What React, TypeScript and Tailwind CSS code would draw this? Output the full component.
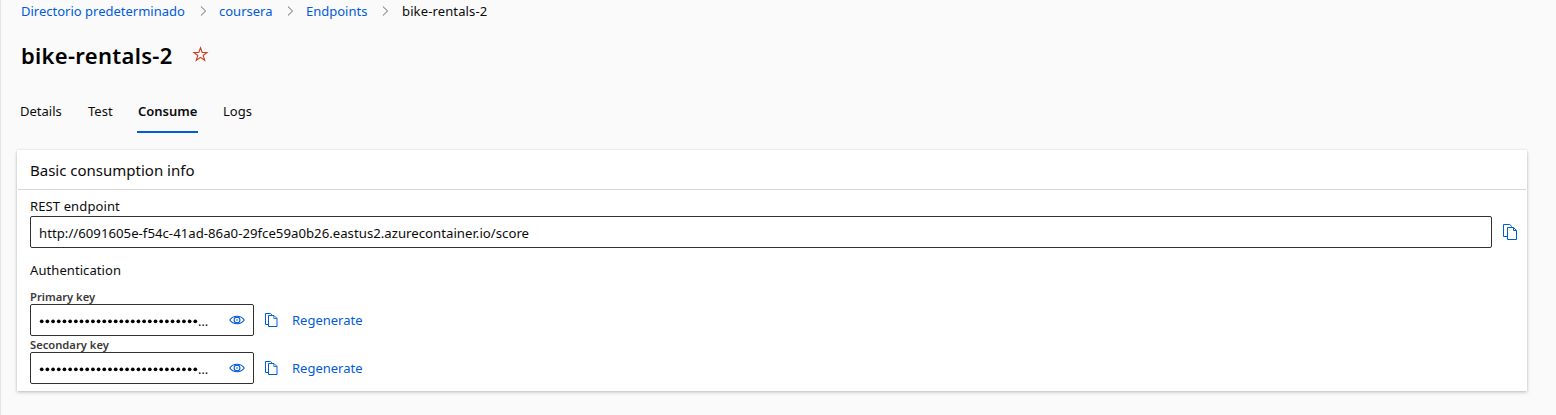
import React from "react";

function CopyIcon({ width, height }: { width: number; height: number }) {
  return (
    <svg width={width} height={height} viewBox={`0 0 ${width} ${height}`} fill="none" stroke="#015cda" className="block shrink-0">
      {height === 16 ? (
        <>
          <path d="M4.500 12.500h-4v-12h6.300L9 2.700" />
          <path d="M4.500 3.500h6l3 3v9h-9z" />
          <path d="M10.500 3.500v3h3" />
        </>
      ) : (
        <>
          <path d="M3.500 11.500h-3v-11h5L7.700 2.600" />
          <path d="M3.500 2.500h5.500l3 3v8H3.500z" />
          <path d="M8.800 2.500v3h3.200" strokeOpacity=".8" />
        </>
      )}
    </svg>
  );
}

function EyeIcon() {
  return (
    <svg width="16" height="10" viewBox="0 0 16 10" fill="none" stroke="#015cda" className="block shrink-0">
      <path strokeWidth="1.100" d="M.8 5C2.400 2.600 4.800 1.300 8 1.300s5.600 1.300 7.200 3.700C13.600 7.400 11.200 8.700 8 8.700S2.400 7.400.8 5z" />
      <circle cx="8" cy="5" r="2.900" strokeWidth="1.100" />
      <circle cx="8" cy="5" r=".8" fill="#015cda" stroke="none" />
    </svg>
  );
}

function Chevron() {
  return (
    <svg width="7" height="10" viewBox="0 0 7 10" fill="none" stroke="#666" className="mr-3 block shrink-0">
      <path d="M.9.5 5.600 5 .9 9.500" />
    </svg>
  );
}

function KeyField({ label }: { label: string }) {
  return (
    <div className="h-12">
      <div className="h-4 pt-px text-[11.200px] leading-4 font-semibold text-[#3b3a39]">{label}</div>
      <div className="flex h-8 items-center">
        <div className="flex h-8 w-[224px] items-center rounded-[2px] border border-[#323130] pl-2">
          <span className="flex w-[190px] shrink-0 pt-[2px] whitespace-nowrap leading-5">
            <svg width="159" height="20" viewBox="0 0 159 20" className="block">
              {Array.from({ length: 28 }, (_, i) => (
                <circle key={i} cx={2.700 + i * 5.690} cy="10.300" r="1.850" />
              ))}
            </svg>
            <span className="text-[13px]">…</span>
          </span>
          <EyeIcon />
        </div>
        <div className="ml-[11px]"><CopyIcon width={13} height={14} /></div>
        <a className="ml-[14px] pb-px text-[13px] text-[#015cda]">Regenerate</a>
      </div>
    </div>
  );
}

export default function App() {
  return (
    <main className="h-[415px] overflow-hidden border-l border-[#e4e4e4] bg-[#fafafa] font-['Noto_Sans',sans-serif] text-[13px] leading-5 text-[#0b0b0b]">
      <nav className="flex h-[22px] items-center pl-5 whitespace-nowrap text-[#015cda]">
        <a className="w-[179px] pb-px">Directorio predeterminado</a>
        <Chevron />
        <a className="w-[68px] pb-px">coursera</a>
        <Chevron />
        <a className="w-[76px] pb-px">Endpoints</a>
        <Chevron />
        <span className="pb-px pl-px tracking-[0.130px] text-[#0b0b0b]">bike-rentals-2</span>
      </nav>
      <header className="flex h-[68px] items-center pl-5 text-black">
        <h1 className="mb-[2px] w-[171px] text-[22px] leading-8 font-semibold tracking-[0.300px] whitespace-nowrap">bike-rentals-2</h1>
        <svg width="17" height="16" viewBox="0 0 17 16" fill="none" stroke="#d13b1e" className="mb-[5px]">
          <path strokeWidth="1.100" d="M8.500 1.800 10.200 6.500H15L11.200 9.500 12.700 14.300 8.500 11.400 4.300 14.300 5.800 9.500 2 6.500H6.800z" />
        </svg>
      </header>
      <div className="flex h-[43px] pl-[19px] whitespace-nowrap">
        <div className="w-[68px] pt-[11px]">Details</div>
        <div className="w-[49px] pt-[11px]">Test</div>
        <div className="mr-[25px] w-[61px] border-b-2 border-[#015cda] pt-[11px] pl-px font-semibold">Consume</div>
        <div className="pt-[11px]">Logs</div>
      </div>
      <section className="mt-[17px] ml-4 h-[241px] w-[1510px] bg-white shadow-[0_1.600px_3.600px_rgba(0,0,0,0.2),0_0_2px_rgba(0,0,0,0.14)]">
        <h2 className="mx-px h-10 border-b border-[#d6d6d6] pl-3 text-[15px] leading-[41px]">Basic consumption info</h2>
        <div className="pl-[13px]">
          <div className="h-[26px] pt-[6px] tracking-[0.120px]">REST endpoint</div>
          <div className="flex h-8 items-center">
            <div className="h-8 w-[1462px] rounded-[2px] border border-[#323130] pl-2 text-[13.200px] leading-[33px] tracking-[0.015px]">
              http://6091605e-f54c-41ad-86a0-29fce59a0b26.eastus2.azurecontainer.io/score
            </div>
            <div className="ml-[11px]"><CopyIcon width={14} height={16} /></div>
          </div>
          <div className="h-10 pt-3 tracking-[0.080px]">Authentication</div>
          <KeyField label="Primary key" />
          <KeyField label="Secondary key" />
        </div>
      </section>
    </main>
  );
}
